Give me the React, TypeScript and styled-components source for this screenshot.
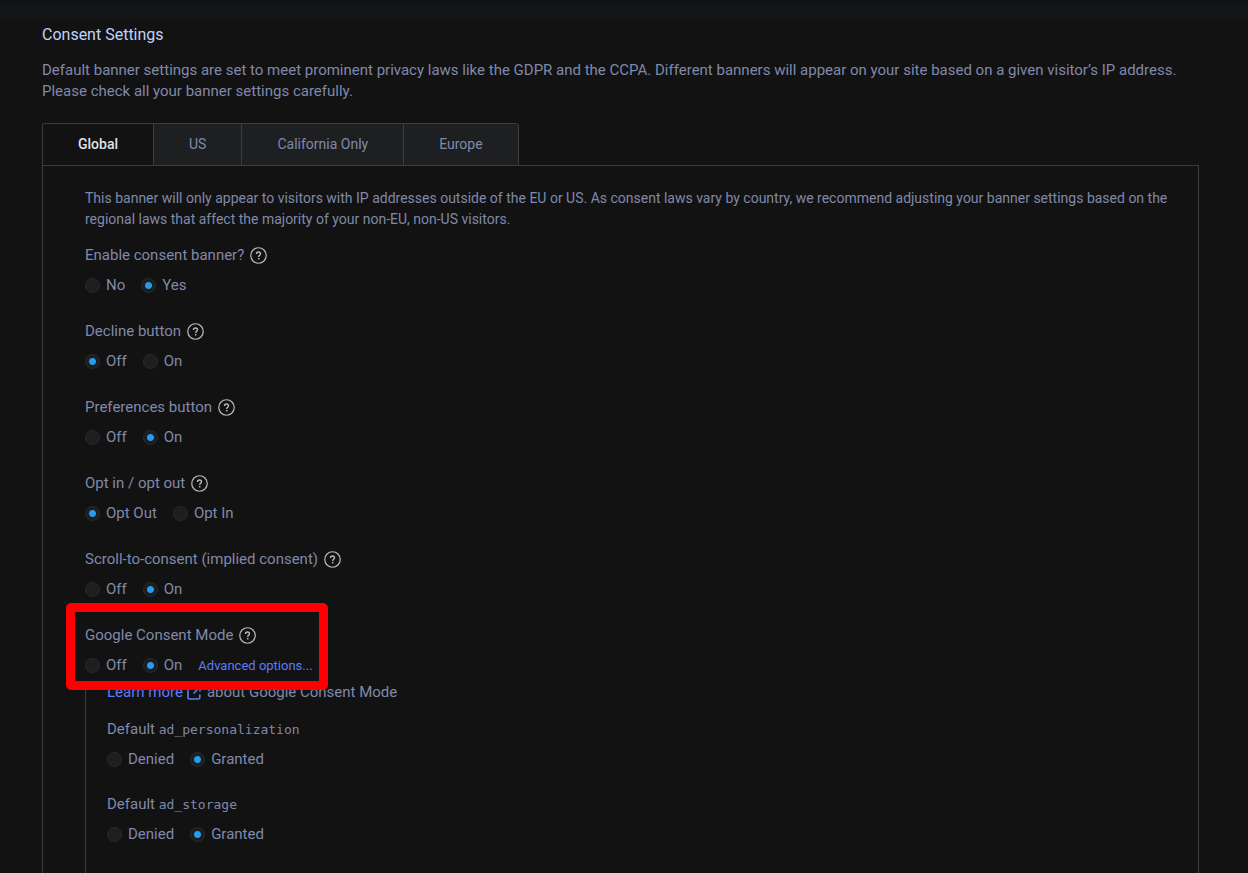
import React, { useState } from "react";
import styled, { createGlobalStyle } from "styled-components";

const GlobalStyle = createGlobalStyle`
  * { box-sizing: border-box; }
  body {
    margin: 0;
    background: #121212;
    color: #8089aa;
    font-family: Roboto, "Liberation Sans", sans-serif;
    font-size: 15px;
    line-height: 21px;
  }
`;

const Page = styled.main`
  height: 100vh;
  overflow: hidden;
  display: flex;
  flex-direction: column;
`;

const TopStrip = styled.div`
  flex: none;
  height: 18px;
  border-top: 2px solid #121212;
  background: #121416;
`;

const Content = styled.div`
  flex: none;
  padding: 6px 49px 0 42px;
`;

const Title = styled.h1`
  margin: 0 0 15px;
  font-size: 16px;
  line-height: 21px;
  font-weight: 400;
  color: #c0d2ff;
`;

const Intro = styled.p`
  margin: 0 0 21px;
`;

const TabList = styled.div`
  display: flex;
  width: fit-content;
  border: 1px solid #3a3c3e;
  border-bottom: 0;
  border-radius: 3px 3px 0 0;
  overflow: hidden;
`;

const Tab = styled.button<{ $active: boolean }>`
  height: 41px;
  padding: 0 35px;
  border: 0;
  border-left: 1px solid #3a3c3e;
  background: ${(p) => (p.$active ? "#121212" : "#1d1f21")};
  color: ${(p) => (p.$active ? "#e0e0e6" : "#8089aa")};
  font: 14px/21px Roboto, "Liberation Sans", sans-serif;
  font-weight: ${(p) => (p.$active ? 500 : 400)};
  cursor: pointer;
  &:first-child { border-left: 0; }
`;

const Panel = styled.section`
  padding: 22px 24px 0 42px;
  border: 1px solid #3a3c3e;
`;

const PanelText = styled.p`
  margin: 0 0 15px;
  font-size: 14px;
`;

const Field = styled.fieldset<{ $nested: boolean }>`
  margin: 0;
  padding: 0;
  border: 0;
  min-width: 0;
  height: ${(p) => (p.$nested ? 75 : 76)}px;
`;

const Legend = styled.legend`
  display: flex;
  align-items: center;
  gap: 6px;
  height: 21px;
  padding: 0;
  margin: 0 0 9px;
`;

const HelpButton = styled.button`
  display: flex;
  padding: 0;
  margin: 0;
  border: 0;
  background: none;
  color: #b8b9ba;
  cursor: pointer;
`;

const Options = styled.div`
  display: flex;
  align-items: center;
  gap: 16px;
`;

const Option = styled.label`
  display: flex;
  align-items: center;
  gap: 6px;
  cursor: pointer;
`;

const Radio = styled.input`
  appearance: none;
  flex: none;
  width: 15px;
  height: 15px;
  margin: 0;
  border: 1px solid #2a2b2c;
  border-radius: 50%;
  background: #1d1e20;
  &:checked {
    background: radial-gradient(circle, #229df0 0 3px, #1b1d1f 4px);
  }
`;

const Link = styled.a<{ $small?: boolean }>`
  display: inline-flex;
  align-items: center;
  gap: 4px;
  color: #5c7cfa;
  font-size: ${(p) => (p.$small ? 13 : 15)}px;
  text-decoration: none;
`;

const Highlighted = styled.div`
  position: relative;
  height: 57px;
`;

const HighlightFrame = styled.div`
  position: absolute;
  top: -22px;
  left: -19px;
  width: 262px;
  height: 87px;
  border: 9px solid #ff0000;
  border-radius: 5px;
  pointer-events: none;
`;

const SubPanel = styled.div`
  border-left: 1px solid #3a3c3e;
  padding-left: 21px;
`;

const Learn = styled.p`
  display: flex;
  align-items: center;
  gap: 6px;
  margin: 0 0 16px;
`;

const Code = styled.code`
  font: 13px/21px "DejaVu Sans Mono", monospace;
`;

const LabelText = styled.span`
  white-space: pre;
`;

const HelpIcon = () => (
  <svg width="17" height="17" viewBox="0 0 18 18" fill="none" stroke="currentColor" aria-hidden="true">
    <circle cx="9" cy="9" r="8.2" strokeWidth="1.3" />
    <path d="M6.9 7.4c0-1.4.9-2.1 2.1-2.1s2.1.7 2.1 1.9c0 1.5-1.9 1.6-1.9 3.3" strokeWidth="1.5" />
    <path d="M9.2 11.6v1.6" strokeWidth="1.6" />
  </svg>
);

const ExternalIcon = () => (
  <svg width="14" height="14" viewBox="0 0 14 14" fill="none" stroke="currentColor" strokeWidth="1.6" aria-hidden="true">
    <path d="M5.5 1.2H2.3c-.8 0-1.3.5-1.3 1.3v9.2c0 .8.5 1.3 1.3 1.3h9.2c.8 0 1.3-.5 1.3-1.3V8.5" />
    <path d="M8.5 1h4.5v4.5M13 1L6.5 7.5" />
  </svg>
);

type RadioFieldProps = {
  name: string;
  label: React.ReactNode;
  options: [string, string];
  initial: 0 | 1;
  help?: boolean;
  nested?: boolean;
  children?: React.ReactNode;
};

function RadioField({ name, label, options, initial, help = false, nested = false, children }: RadioFieldProps) {
  const [value, setValue] = useState<number>(initial);
  return (
    <Field $nested={nested}>
      <Legend>
        <LabelText>{label}</LabelText>
        {help && (
          <HelpButton type="button" aria-label="Help">
            <HelpIcon />
          </HelpButton>
        )}
      </Legend>
      <Options>
        {options.map((text, i) => (
          <Option key={text}>
            <Radio type="radio" name={name} checked={value === i} onChange={() => setValue(i)} />
            {text}
          </Option>
        ))}
        {children}
      </Options>
    </Field>
  );
}

const tabs = ["Global", "US", "California Only", "Europe"];
const defaults = ["ad_personalization", "ad_storage", "ad_user_data"];

export default function App() {
  const [tab, setTab] = useState(0);
  return (
    <Page>
      <GlobalStyle />
      <TopStrip />
      <Content>
        <Title>Consent Settings</Title>
        <Intro>
          Default banner settings are set to meet prominent privacy laws like the GDPR and the CCPA. Different banners
          will appear on your site based on a given visitor’s IP address. Please check all your banner settings
          carefully.
        </Intro>
        <TabList role="tablist">
          {tabs.map((name, i) => (
            <Tab key={name} role="tab" type="button" aria-selected={tab === i} $active={tab === i} onClick={() => setTab(i)}>
              {name}
            </Tab>
          ))}
        </TabList>
        <Panel role="tabpanel">
          <PanelText>
            This banner will only appear to visitors with IP addresses outside of the EU or US. As consent laws vary by
            country, we recommend adjusting your banner settings based on the regional laws that affect the majority of
            your non-EU, non-US visitors.
          </PanelText>
          <RadioField name="banner" label="Enable consent banner?" options={["No", "Yes"]} initial={1} help />
          <RadioField name="decline" label="Decline button" options={["Off", "On"]} initial={0} help />
          <RadioField name="preferences" label="Preferences button" options={["Off", "On"]} initial={1} help />
          <RadioField name="opt" label="Opt in / opt out" options={["Opt Out", "Opt In"]} initial={0} help />
          <RadioField name="scroll" label="Scroll-to-consent (implied consent)" options={["Off", "On"]} initial={1} help />
          <Highlighted>
            <RadioField name="google" label="Google Consent Mode" options={["Off", "On"]} initial={1} help>
              <Link $small href="#advanced">Advanced options...</Link>
            </RadioField>
            <HighlightFrame />
          </Highlighted>
          <SubPanel>
            <Learn>
              <Link href="#learn">
                Learn more
                <ExternalIcon />
              </Link>
              about Google Consent Mode
            </Learn>
            {defaults.map((key) => (
              <RadioField
                key={key}
                name={key}
                label={<>Default <Code>{key}</Code></>}
                options={["Denied", "Granted"]}
                initial={1}
                nested
              />
            ))}
          </SubPanel>
        </Panel>
      </Content>
    </Page>
  );
}
